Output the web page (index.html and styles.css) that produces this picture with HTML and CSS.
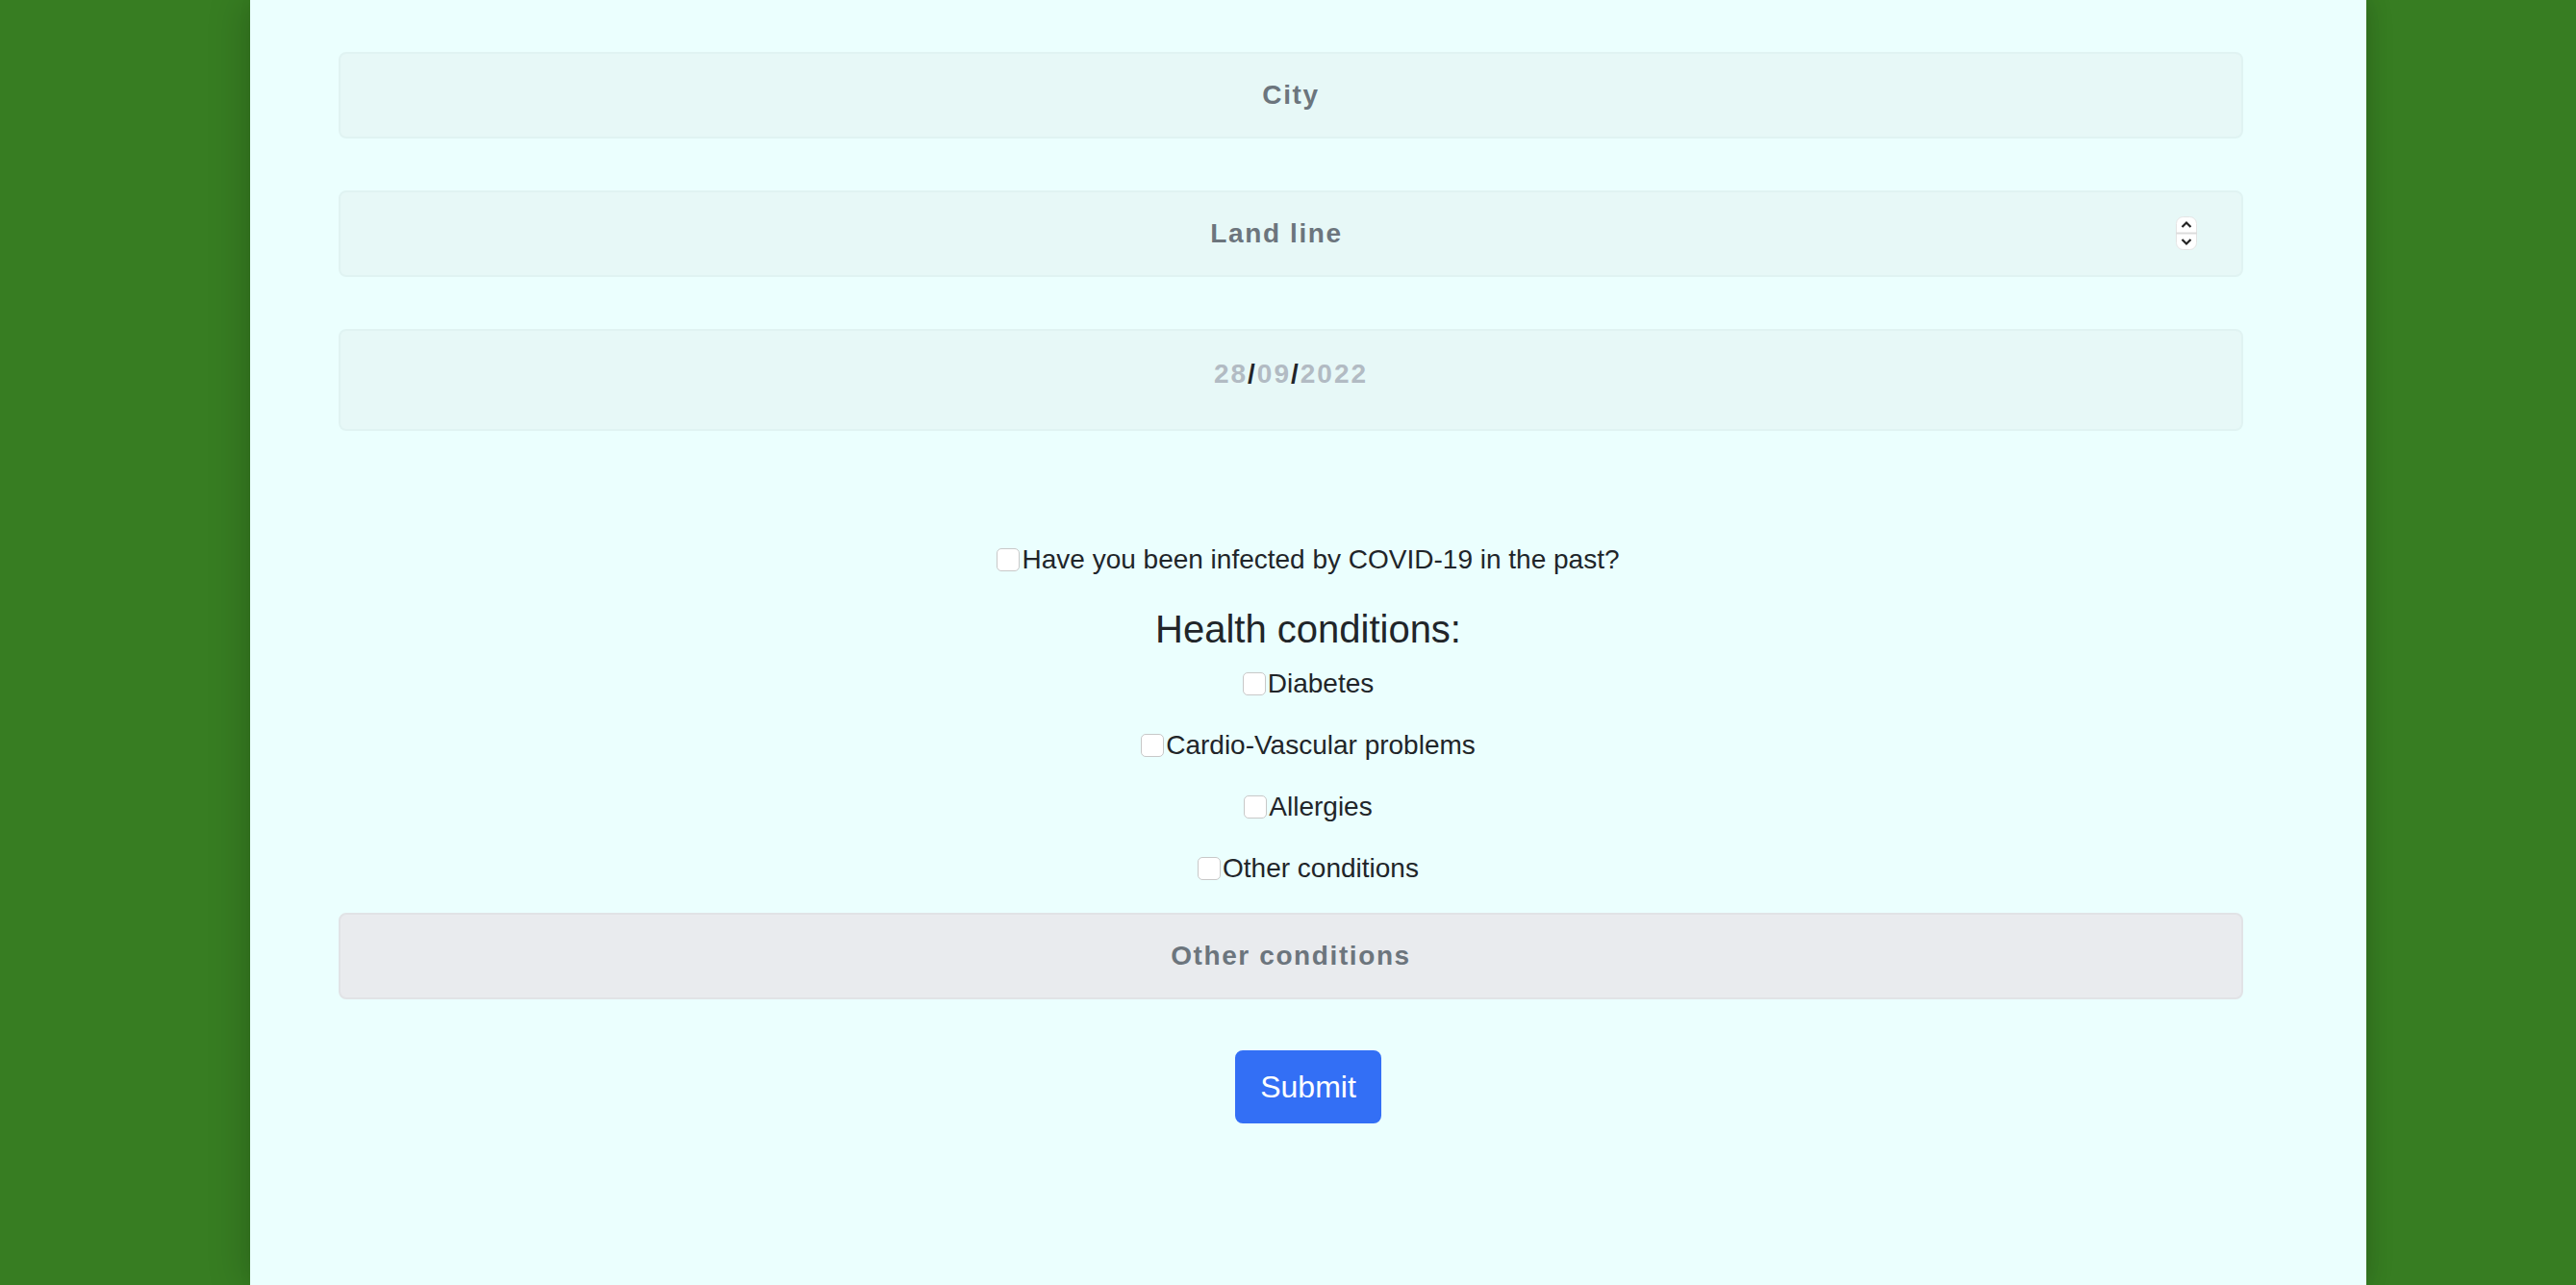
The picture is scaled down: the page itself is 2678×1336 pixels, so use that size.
FILE: index.html
```html
<!DOCTYPE html>
<html lang="en">
<head>
<meta charset="utf-8">
<title>Registration form</title>
<link rel="stylesheet" href="styles.css">
</head>
<body>
<div class="page">
  <main class="card">
    <form class="form">
      <input class="field" type="text" placeholder="City">
      <div class="field-wrap">
        <input class="field field-number" type="text" placeholder="Land line">
        <span class="spinner">
          <svg width="22" height="35" viewBox="0 0 22 35">
            <rect x="0.5" y="0.5" width="21" height="34" rx="7" fill="#ffffff" stroke="#e4e4e4"/>
            <line x1="0" y1="17.5" x2="22" y2="17.5" stroke="#dcdcdc" stroke-width="2"/>
            <path d="M6.5 11 L11 6.5 L15.5 11" fill="none" stroke="#222" stroke-width="2.2"/>
            <path d="M6.5 24 L11 28.5 L15.5 24" fill="none" stroke="#222" stroke-width="2.2"/>
          </svg>
        </span>
      </div>
      <div class="field field-date"><span class="dpart">28</span><span class="dsep">/</span><span class="dpart">09</span><span class="dsep">/</span><span class="dpart">2022</span></div>

      <div class="checks">
        <label class="check check-first"><input type="checkbox" class="box">Have you been infected by COVID-19 in the past?</label>
        <h5 class="heading">Health conditions:</h5>
        <label class="check"><input type="checkbox" class="box">Diabetes</label>
        <label class="check"><input type="checkbox" class="box">Cardio-Vascular problems</label>
        <label class="check"><input type="checkbox" class="box">Allergies</label>
        <label class="check"><input type="checkbox" class="box">Other conditions</label>
      </div>

      <input class="field field-disabled" type="text" placeholder="Other conditions" disabled>

      <div class="actions">
        <button type="button" class="btn">Submit</button>
      </div>
    </form>
  </main>
</div>
</body>
</html>
```

FILE: styles.css
```css
html, body {
  margin: 0;
  padding: 0;
}

body {
  background: #377d22;
  font-family: "Liberation Sans", Arial, sans-serif;
  color: #212529;
}

.page {
  padding-left: 260px;
  min-height: 1336px;
}

.card {
  width: 2200px;
  min-height: 1336px;
  background: #ebfffe;
  box-shadow: -8px 0 36px rgba(0, 0, 0, 0.16), 6px 0 18px rgba(0, 0, 0, 0.08);
}

.form {
  display: flex;
  flex-direction: column;
  padding-top: 54px;
}

.field {
  box-sizing: border-box;
  display: block;
  width: 1980px;
  height: 90px;
  margin: 0 0 54px 92px;
  padding: 0 24px;
  border: 2px solid #e0f3f2;
  border-radius: 8px;
  background: #e7f8f7;
  font-family: "Liberation Sans", Arial, sans-serif;
  font-size: 28px;
  font-weight: 700;
  letter-spacing: 1.6px;
  text-align: center;
  color: #6c757d;
  outline: none;
}

.field::placeholder {
  color: #6c757d;
  opacity: 1;
}

.field-wrap {
  position: relative;
  width: 1980px;
  margin-left: 92px;
}

.field-wrap .field {
  margin-left: 0;
}

.field-number {
  padding-right: 54px;
}

.spinner {
  position: absolute;
  right: 48px;
  top: 27px;
  width: 22px;
  height: 35px;
  display: block;
}

.spinner svg {
  display: block;
}

.field-date {
  height: 106px;
  margin-bottom: 113px;
  display: flex;
  align-items: center;
  justify-content: center;
  padding-bottom: 12px;
  letter-spacing: 2px;
}

.dpart {
  color: #b2bbc3;
}

.dsep {
  color: #212529;
}

.checks {
  display: flex;
  flex-direction: column;
  align-items: center;
  margin-bottom: 25px;
}

.check {
  display: flex;
  align-items: center;
  height: 42px;
  font-size: 28px;
  line-height: 42px;
  color: #212529;
  margin-bottom: 22px;
}

.check:last-child {
  margin-bottom: 0;
}

.check-first {
  margin-bottom: 27px;
}

.box {
  -webkit-appearance: none;
  appearance: none;
  box-sizing: border-box;
  width: 24px;
  height: 24px;
  margin: 0 2px 0 0;
  border: 1.5px solid #c8c8c8;
  border-radius: 5px;
  background: #ffffff;
}

.heading {
  margin: 0 0 12px 0;
  font-size: 40px;
  line-height: 48px;
  font-weight: 400;
  color: #212529;
}

.field-disabled {
  background: #e9ebee;
  border-color: #e1e3e6;
  margin-bottom: 53px;
}

.actions {
  display: flex;
  justify-content: center;
}

.btn {
  box-sizing: border-box;
  width: 152px;
  height: 76px;
  padding: 0;
  border: 2px solid #336ff5;
  border-radius: 8px;
  background: #336ff5;
  color: #ffffff;
  font-family: "Liberation Sans", Arial, sans-serif;
  font-size: 32px;
  line-height: 48px;
}
```
